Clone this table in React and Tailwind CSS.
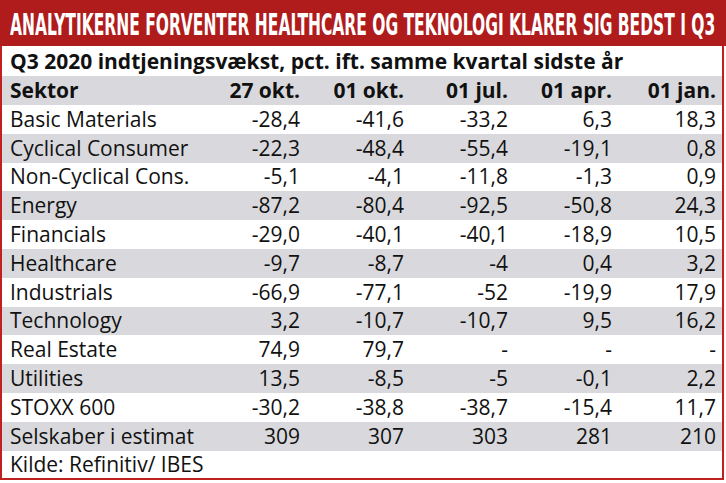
const ROWS = [
  ['Basic Materials', '-28,4', '-41,6', '-33,2', '6,3', '18,3'],
  ['Cyclical Consumer', '-22,3', '-48,4', '-55,4', '-19,1', '0,8'],
  ['Non-Cyclical Cons.', '-5,1', '-4,1', '-11,8', '-1,3', '0,9'],
  ['Energy', '-87,2', '-80,4', '-92,5', '-50,8', '24,3'],
  ['Financials', '-29,0', '-40,1', '-40,1', '-18,9', '10,5'],
  ['Healthcare', '-9,7', '-8,7', '-4', '0,4', '3,2'],
  ['Industrials', '-66,9', '-77,1', '-52', '-19,9', '17,9'],
  ['Technology', '3,2', '-10,7', '-10,7', '9,5', '16,2'],
  ['Real Estate', '74,9', '79,7', '-', '-', '-'],
  ['Utilities', '13,5', '-8,5', '-5', '-0,1', '2,2'],
  ['STOXX 600', '-30,2', '-38,8', '-38,7', '-15,4', '11,7'],
  ['Selskaber i estimat', '309', '307', '303', '281', '210'],
]

const HEAD = ['Sektor', '27 okt.', '01 okt.', '01 jul.', '01 apr.', '01 jan.']

function Row({ cells, bold, gray, h }) {
  return (
    <div className={`grid grid-cols-[186px_repeat(5,104px)] pl-[8px] items-center ${h} ${gray ? 'bg-[#d9d9dd]' : 'bg-white'} ${bold ? 'font-bold' : ''}`}>
      {cells.map((c, i) => (
        <div key={i} className={i === 0 ? 'text-left whitespace-nowrap' : 'text-right'}>{c}</div>
      ))}
    </div>
  )
}

export default function App() {
  return (
    <div className="w-[726px] h-[483px] bg-white text-[#111] overflow-hidden" style={{ fontFamily: '"Open Sans", sans-serif' }}>
      <div className="h-[46px] bg-[#b01b1b] flex items-center pl-[10px] pt-[4px] overflow-hidden">
        <span className="inline-block text-white font-bold text-[30px] uppercase whitespace-nowrap origin-left leading-none scale-x-[0.574]"
          style={{ fontFamily: '"DejaVu Sans Condensed", sans-serif' }}>
          Analytikerne forventer healthcare og teknologi klarer sig bedst i Q3
        </span>
      </div>
      <div className="w-[724px] border-x-2 border-b-2 border-[#c0201f] text-[21px] leading-none">
        <div className="h-[30px] flex items-center pl-[8px] font-bold whitespace-nowrap">
          Q3 2020 indtjeningsvækst, pct. ift. samme kvartal sidste år
        </div>
        <Row cells={HEAD} bold gray h="h-[29px]" />
        {ROWS.map((r, i) => (
          <Row key={i} cells={r} gray={i % 2 === 1} h="h-[28.8px]" />
        ))}
        <div className="h-[27px] flex items-center pl-[8px]">Kilde: Refinitiv/ IBES</div>
      </div>
    </div>
  )
}
